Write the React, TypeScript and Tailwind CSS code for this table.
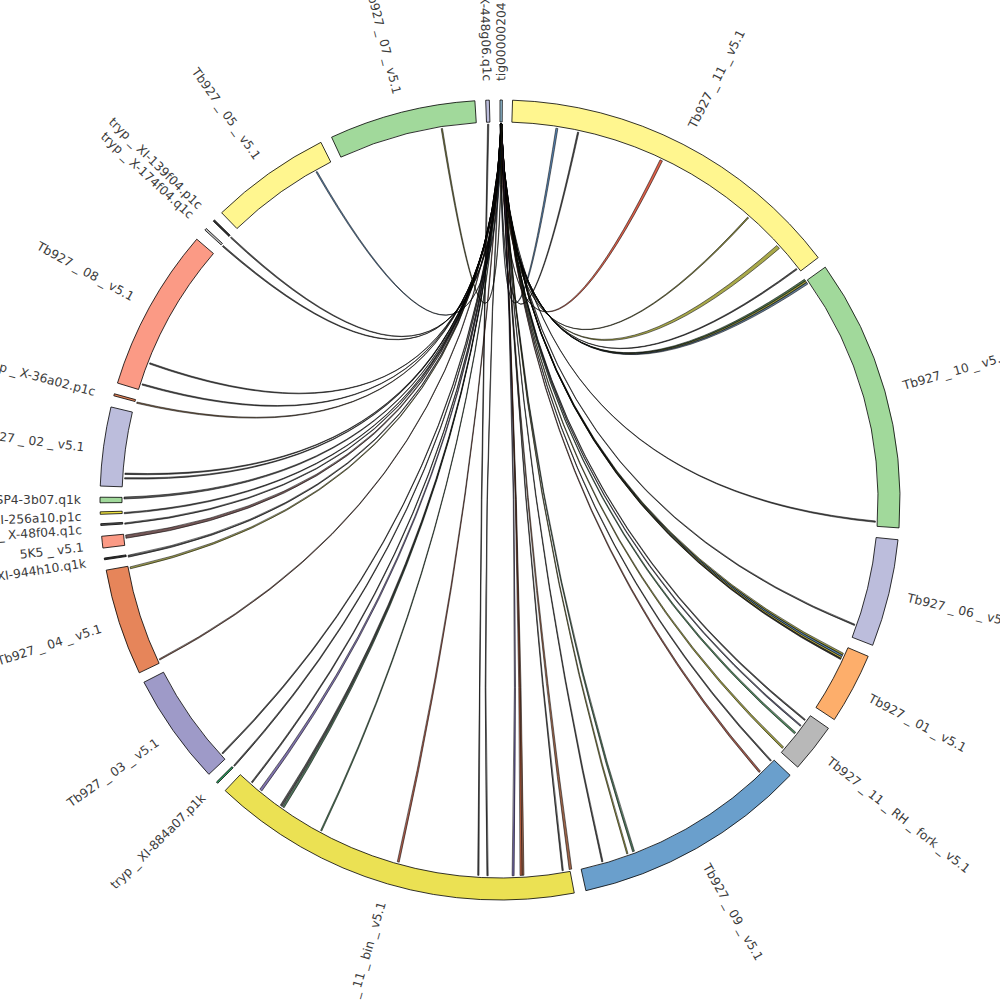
import React from "react";

type Seg = { n: string; a: number; b: number; c: string; la?: number };

const segs: Seg[] = [
  { n: "tig00000204", a: 0.0, b: 0.33, c: "#9ecae1" },
  { n: "Tb927_11_v5.1", a: 1.8, b: 52.7, c: "#fff68f" },
  { n: "Tb927_10_v5.1", a: 54.4, b: 94.0, c: "#a1d99b" },
  { n: "Tb927_06_v5.1", a: 95.7, b: 111.3, c: "#bcbddc" },
  { n: "Tb927_01_v5.1", a: 113.0, b: 123.3, c: "#fdae6b" },
  { n: "Tb927_11_RH_fork_v5.1", a: 124.8, b: 131.9, c: "#b8b8b8" },
  { n: "Tb927_09_v5.1", a: 133.5, b: 167.6, c: "#6a9fcc" },
  { n: "Tb927_11_bin_v5.1", a: 169.3, b: 223.4, c: "#ebe153" },
  { n: "tryp_XI-884a07.p1k", a: 224.9, b: 225.15, c: "#2ca25f" },
  { n: "Tb927_03_v5.1", a: 226.7, b: 242.9, c: "#9e9ac8" },
  { n: "Tb927_04_v5.1", a: 244.4, b: 259.9, c: "#e6855a" },
  { n: "tryp_XI-944h10.q1k", a: 261.4, b: 261.65, c: "#333333", la: 261.3 },
  { n: "5K5_v5.1", a: 263.1, b: 264.8, c: "#fb9a85", la: 263.5 },
  { n: "tryp_X-48f04.q1c", a: 266.35, b: 266.6, c: "#555555", la: 265.9 },
  { n: "tryp_XI-256a10.p1c", a: 267.95, b: 268.3, c: "#f0e442", la: 267.7 },
  { n: "tryp_X-SP4-3b07.q1k", a: 269.6, b: 270.4, c: "#a1d99b", la: 270.0 },
  { n: "Tb927_02_v5.1", a: 272.0, b: 283.45, c: "#bcbddc", la: 277.2 },
  { n: "tryp_X-36a02.p1c", a: 285.1, b: 285.4, c: "#e6855a", la: 284.9 },
  { n: "Tb927_08_v5.1", a: 287.0, b: 310.7, c: "#fb9a85" },
  { n: "tryp_X-174f04.q1c", a: 312.45, b: 312.75, c: "#bbbbbb" },
  { n: "tryp_XI-139f04.p1c", a: 314.2, b: 314.45, c: "#333333" },
  { n: "Tb927_05_v5.1", a: 315.9, b: 333.4, c: "#fff68f" },
  { n: "Tb927_07_v5.1", a: 335.1, b: 356.4, c: "#a1d99b" },
  { n: "tryp_X-448g06.q1c", a: 357.95, b: 358.47, c: "#bcbddc" },
];

// link ends: [angle, width, color]
const links: [number, number, string][] = [
  [8.7, 0.3, "#3b6ea5"],
  [12.0, 0.2, "#333333"],
  [25.4, 0.4, "#d7452c"],
  [41.3, 0.2, "#7a7a1a"],
  [47.7, 0.6, "#9a9a2a"],
  [52.1, 0.2, "#333333"],
  [54.2, 0.3, "#2f5f2f"],
  [54.5, 0.3, "#8a8a20"],
  [54.8, 0.3, "#4a6a8a"],
  [93.3, 0.2, "#333333"],
  [109.4, 0.2, "#333333"],
  [114.2, 0.3, "#8a8a20"],
  [114.5, 0.3, "#3b6ea5"],
  [114.8, 0.3, "#b5a82a"],
  [115.0, 0.2, "#222222"],
  [125.8, 0.2, "#333333"],
  [126.9, 0.2, "#4a4a6a"],
  [128.3, 0.3, "#2f6f3f"],
  [131.2, 0.3, "#8a8a20"],
  [133.9, 0.2, "#333333"],
  [136.3, 0.3, "#8c3a2a"],
  [159.2, 0.3, "#2f5f3f"],
  [160.2, 0.2, "#8a8a20"],
  [164.2, 0.2, "#333333"],
  [169.2, 0.4, "#8c4a2a"],
  [170.4, 0.2, "#333333"],
  [176.5, 0.3, "#8c4a2a"],
  [176.8, 0.3, "#c0502a"],
  [178.0, 0.3, "#54478f"],
  [181.9, 0.2, "#333333"],
  [183.3, 0.2, "#333333"],
  [195.7, 0.3, "#a0402a"],
  [208.4, 0.2, "#2f6f3f"],
  [215.2, 0.3, "#2f5f3f"],
  [215.6, 0.3, "#333333"],
  [219.5, 0.4, "#6a5a9f"],
  [221.3, 0.2, "#333333"],
  [225.0, 0.2, "#333333"],
  [227.6, 0.2, "#333333"],
  [244.9, 0.2, "#6a3a2a"],
  [259.6, 0.3, "#8a8a30"],
  [261.4, 0.3, "#333333"],
  [264.4, 0.5, "#5a3a3a"],
  [266.4, 0.2, "#333333"],
  [268.0, 0.2, "#333333"],
  [270.3, 0.3, "#3a3a3a"],
  [273.3, 0.2, "#333333"],
  [274.0, 0.2, "#333333"],
  [285.0, 0.2, "#6a4a2a"],
  [287.9, 0.2, "#333333"],
  [291.3, 0.2, "#333333"],
  [312.5, 0.2, "#333333"],
  [314.3, 0.2, "#333333"],
  [330.8, 0.2, "#3b6ea5"],
  [351.1, 0.2, "#6a6a20"],
];

const CX = 500;
const CY = 500;
const RO = 400;
const RI = 378;
const RL = 376;
const US = 3.8;

const P = (t: number, r: number): [number, number] => {
  const a = (t * Math.PI) / 180;
  return [CX + r * Math.sin(a), CY - r * Math.cos(a)];
};
const f = (p: [number, number]) => `${p[0].toFixed(2)} ${p[1].toFixed(2)}`;

const segPath = (a: number, b: number) => {
  const large = b - a > 180 ? 1 : 0;
  return `M ${f(P(a, RO))} A ${RO} ${RO} 0 ${large} 1 ${f(P(b, RO))} L ${f(P(b, RI))} A ${RI} ${RI} 0 ${large} 0 ${f(P(a, RI))} Z`;
};

const linkPath = (s1: number, s2: number, e1: number, e2: number) => {
  const sm = (s1 + s2) / 2;
  const em = (e1 + e2) / 2;
  const d = ((em - sm + 540) % 360) - 180;
  const mid = sm + d / 2;
  const c = f(P(mid, 20));
  return `M ${f(P(s1, RL))} A ${RL} ${RL} 0 0 1 ${f(P(s2, RL))} Q ${c} ${f(P(e1, RL))} A ${RL} ${RL} 0 0 1 ${f(P(e2, RL))} Q ${c} ${f(P(s1, RL))} Z`;
};

function Label({ name }: { name: string }) {
  const parts = name.split("_");
  const out: React.ReactNode[] = [];
  parts.forEach((p, i) => {
    if (i > 0) {
      out.push(
        <tspan key={`u${i}`} dx={US}>
          _
        </tspan>
      );
      out.push(
        <tspan key={`p${i}`} dx={US}>
          {p}
        </tspan>
      );
    } else {
      out.push(<tspan key={`p${i}`}>{p}</tspan>);
    }
  });
  return <>{out}</>;
}

export default function App() {
  const n = links.length;
  return (
    <div className="w-[1000px] h-[1000px] bg-white overflow-hidden">
      <svg width="1000" height="1000" viewBox="0 0 1000 1000" className="block">
        <g>
          {links.map(([e, w, c], i) => {
            const s1 = 0.03 + (0.22 * i) / (n - 1);
            const s2 = s1 + 0.08;
            const isX = i === 30;
            const a1 = isX ? 358.1 : s1;
            const a2 = isX ? 358.3 : s2;
            return (
              <path
                key={i}
                d={linkPath(a1, a2, e - w / 2, e + w / 2)}
                fill={c}
                fillOpacity={0.85}
                stroke="#000"
                strokeWidth={0.6}
                strokeOpacity={0.9}
              />
            );
          })}
        </g>
        <g>
          {segs.map((s) => (
            <path key={s.n} d={segPath(s.a, s.b)} fill={s.c} stroke="#000" strokeWidth={0.8} />
          ))}
        </g>
        <g fontFamily="'DejaVu Sans', sans-serif" fontSize={12.3} fill="#3c3c3c">
          {segs.map((s) => {
            const t = s.la ?? (s.a + s.b) / 2;
            const [x, y] = P(t, 419);
            const right = t <= 180;
            const rot = right ? t - 90 : t + 90;
            return (
              <text
                key={s.n}
                x={x}
                y={y}
                textAnchor={right ? "start" : "end"}
                dominantBaseline="central"
                transform={`rotate(${rot.toFixed(2)} ${x.toFixed(2)} ${y.toFixed(2)})`}
              >
                <Label name={s.n} />
              </text>
            );
          })}
        </g>
      </svg>
    </div>
  );
}
